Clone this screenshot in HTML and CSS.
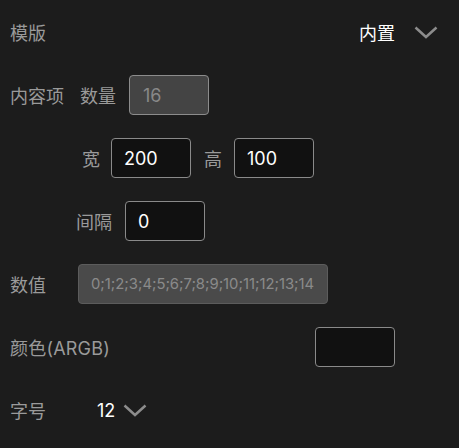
FILE: index.html
```html
<!DOCTYPE html>
<html lang="zh-CN">
<head>
    <meta charset="UTF-8">
    <meta name="viewport" content="width=device-width, initial-scale=1.0">
    <title>属性</title>
    <link rel="stylesheet" href="styles.css">
</head>
<body>
    <div class="panel">
        <div class="row">
            <span class="label">模版</span>
            <div class="select select-right">
                <span class="select-value">内置</span>
                <svg class="chevron" width="24" height="13" viewBox="0 0 24 13"><path d="M1.5 1.5 L12 11 L22.5 1.5" /></svg>
            </div>
        </div>

        <div class="row">
            <span class="label">内容项</span>
            <span class="label label-count">数量</span>
            <input class="field field-disabled field-count" type="text" value="16" disabled>
        </div>

        <div class="row">
            <span class="label label-width">宽</span>
            <input class="field field-w" type="text" value="200">
            <span class="label label-height">高</span>
            <input class="field field-h" type="text" value="100">
        </div>

        <div class="row">
            <span class="label label-gap">间隔</span>
            <input class="field field-gap" type="text" value="0">
        </div>

        <div class="row">
            <span class="label">数值</span>
            <input class="field field-values" type="text" value="0;1;2;3;4;5;6;7;8;9;10;11;12;13;14" disabled>
        </div>

        <div class="row">
            <span class="label label-color">颜色(ARGB)</span>
            <div class="color-box"></div>
        </div>

        <div class="row">
            <span class="label">字号</span>
            <div class="select select-size">
                <span class="select-value">12</span>
                <svg class="chevron" width="24" height="13" viewBox="0 0 24 13"><path d="M1.5 1.5 L12 11 L22.5 1.5" /></svg>
            </div>
        </div>
    </div>
</body>
</html>
```

FILE: styles.css
```css
html, body {
    margin: 0;
    height: 100%;
}

body {
    background: #1c1c1c;
    font-family: Inter, "Noto Sans CJK SC", sans-serif;
    font-size: 18px;
    color: #9a9a9a;
}

.panel {
    display: flex;
    flex-direction: column;
    gap: 23px;
    padding: 12px 21px 0 10px;
}

.row {
    display: flex;
    align-items: center;
    height: 40px;
}

.label {
    color: #9a9a9a;
    white-space: nowrap;
}

.label-count {
    margin-left: 16px;
}

.label-width {
    margin-left: 72px;
}

.label-height {
    margin-left: 13px;
}

.label-gap {
    margin-left: 66px;
}

.label-color {
    letter-spacing: 0.2px;
}

.field {
    box-sizing: border-box;
    width: 80px;
    height: 40px;
    padding: 0 12px;
    border: 1px solid #8a8a8a;
    border-radius: 4px;
    background: #111;
    color: #fff;
    font-family: inherit;
    font-size: 18px;
    outline: none;
}

.field-disabled {
    background: #444;
    color: #888;
    border-color: #8c8c8c;
}

.field-count {
    margin-left: 13px;
    padding-left: 13px;
}

.field-w {
    margin-left: 11px;
}

.field-h {
    margin-left: 12px;
}

.field-gap {
    margin-left: 13px;
}

.field-values {
    margin-left: 32px;
    width: 250px;
    padding: 0 6px 0 12px;
    background: #4a4a4a;
    border-color: #5c5c5c;
    color: #8a8a8a;
    font-size: 14.8px;
}

.color-box {
    box-sizing: border-box;
    width: 80px;
    height: 40px;
    margin-left: auto;
    margin-right: 43px;
    border: 1px solid #8a8a8a;
    border-radius: 4px;
    background: #111;
}

.select {
    display: flex;
    align-items: center;
}

.select-right {
    margin-left: auto;
    gap: 19px;
}

.select-size {
    margin-left: 51px;
    gap: 8px;
}

.select-value {
    color: #fff;
}

.chevron path {
    fill: none;
    stroke: #8c8c8c;
    stroke-width: 2.5;
}
```
